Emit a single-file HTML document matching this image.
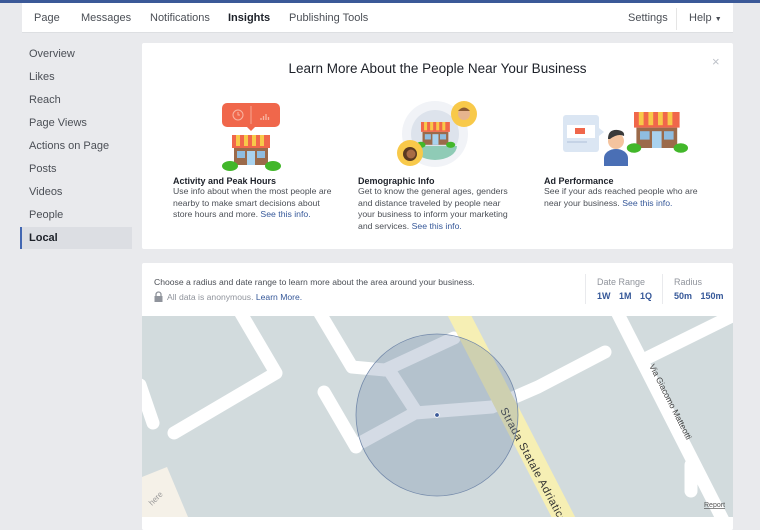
<!DOCTYPE html>
<html><head><meta charset="utf-8"><style>
*{margin:0;padding:0;box-sizing:border-box}
body{width:760px;height:530px;overflow:hidden;background:#e9eaed;font-family:"Liberation Sans",Arial,sans-serif;position:relative;color:#4b4f56}
.abs{position:absolute}
.topline{left:0;top:0;width:760px;height:3px;background:#3b5998}
.nav{left:22px;top:3px;width:711px;height:30px;background:#fff;border-bottom:1px solid #dddfe2}
.nav span{position:absolute;top:9px;font-size:11px;color:#4b4f56}
.side div{position:absolute;left:29px;font-size:11px;color:#4b4f56}
.card{background:#fff;border-radius:2px}
.h{font-size:9px;font-weight:bold;color:#1d2129}
.t{font-size:8.7px;line-height:11.7px;color:#4b4f56}
a{color:#365899;text-decoration:none}
</style></head><body>
<div class="abs topline"></div>
<div class="abs nav">
<span style="left:12px">Page</span>
<span style="left:59px">Messages</span>
<span style="left:128px">Notifications</span>
<span style="left:206px;font-weight:bold;color:#1d2129">Insights</span>
<span style="left:267px">Publishing Tools</span>
<span style="left:606px">Settings</span>
<div class="abs" style="left:654px;top:5px;width:1px;height:22px;background:#e5e5e5"></div>
<span style="left:667px">Help <span style="position:static;font-size:7px">▼</span></span>
</div>
<div class="side">
<div style="top:48px">Overview</div>
<div style="top:71px">Likes</div>
<div style="top:94px">Reach</div>
<div style="top:117px">Page Views</div>
<div style="top:140px">Actions on Page</div>
<div style="top:163px">Posts</div>
<div style="top:186px">Videos</div>
<div style="top:209px">People</div>
</div>
<div class="abs" style="left:20px;top:227px;width:112px;height:22px;background:#dcdee3;border-left:2px solid #4267b2"></div>
<div class="abs" style="left:29px;top:232px;font-size:11px;font-weight:bold;color:#1d2129">Local</div>

<div class="abs card" style="left:142px;top:43px;width:591px;height:206px"></div>
<div class="abs" style="left:142px;top:61px;width:591px;text-align:center;font-size:13.5px;color:#1d2129">Learn More About the People Near Your Business</div>
<div class="abs" style="left:712px;top:54px;font-size:13px;color:#bec2c9">×</div>

<svg class="abs" style="left:0;top:0" width="760" height="250">
<rect x="222" y="103" width="58" height="24" rx="5" fill="#f0674b"/>
<polygon points="247,127 255,127 251,131" fill="#f0674b"/>
<circle cx="238" cy="115" r="5" fill="none" stroke="#f8b5a3" stroke-width="1"/>
<path d="M238 112v3h2" stroke="#f8b5a3" fill="none" stroke-width="1"/>
<line x1="251" y1="106" x2="251" y2="124" stroke="#f8b5a3" stroke-width="0.8"/>
<path d="M261 120v-2M263.5 120v-4M266 120v-6M268.5 120v-3" stroke="#f8b5a3" stroke-width="1.3"/>
<g>
<rect x="234" y="148" width="34" height="17" fill="#9b6a4a"/>
<rect x="237" y="151" width="8" height="7" fill="#8fbde0"/>
<rect x="257" y="151" width="8" height="7" fill="#8fbde0"/>
<rect x="247" y="151" width="8" height="14" fill="#a9d2ee"/>
<rect x="232" y="135" width="38" height="13" fill="#f0674b"/>
<rect x="236" y="135" width="4" height="11" fill="#f8c94a"/><rect x="244" y="135" width="4" height="11" fill="#f8c94a"/><rect x="252" y="135" width="4" height="11" fill="#f8c94a"/><rect x="260" y="135" width="4" height="11" fill="#f8c94a"/>
<ellipse cx="230" cy="166" rx="8" ry="5" fill="#42b72a"/><ellipse cx="273" cy="166" rx="8" ry="5" fill="#42b72a"/>
</g>
<circle cx="435" cy="134" r="33" fill="#f1f3f7"/>
<circle cx="435" cy="134" r="24" fill="#dde3ec"/>
<path d="M413 146 h44 a22 14 0 0 1 -44 0z" fill="#8fcbb6"/>
<g transform="translate(421,122) scale(0.76) translate(-232,-135)">
<rect x="234" y="148" width="34" height="17" fill="#9b6a4a"/><rect x="237" y="151" width="8" height="7" fill="#8fbde0"/><rect x="257" y="151" width="8" height="7" fill="#8fbde0"/><rect x="247" y="151" width="8" height="14" fill="#a9d2ee"/><rect x="232" y="135" width="38" height="13" fill="#f0674b"/><rect x="236" y="135" width="4" height="11" fill="#f8c94a"/><rect x="244" y="135" width="4" height="11" fill="#f8c94a"/><rect x="252" y="135" width="4" height="11" fill="#f8c94a"/><rect x="260" y="135" width="4" height="11" fill="#f8c94a"/><ellipse cx="232" cy="165" rx="6" ry="4" fill="#42b72a"/><ellipse cx="271" cy="165" rx="6" ry="4" fill="#42b72a"/>
</g>
<circle cx="464" cy="114" r="13" fill="#f8c94a"/><circle cx="464" cy="114" r="6" fill="#e6b48e"/><path d="M458 111 q6 -7 12 0z" fill="#8a5a34"/>
<circle cx="410" cy="153" r="13" fill="#f8c94a"/><circle cx="410" cy="154" r="7" fill="#5a3a22"/><circle cx="411" cy="154" r="4.5" fill="#a86b45"/>
<rect x="563" y="115" width="36" height="37" rx="3" fill="#dbe6f3"/>
<rect x="567" y="125" width="28" height="13" fill="#fff"/>
<rect x="575" y="128" width="10" height="6" fill="#f0674b"/>
<rect x="567" y="141" width="20" height="2" fill="#c5d3e6"/>
<polygon points="599,128 604,132 599,136" fill="#dbe6f3"/>
<path d="M604 166 v-8 a12 9 0 0 1 24 0 v8z" fill="#4a6fb5"/>
<circle cx="616" cy="141" r="8" fill="#f4c39e"/><path d="M608 139 q0 -10 10 -9 q7 1 6 6 q-6 -3 -14 3z" fill="#3a3a3a"/>
<g transform="translate(634,112) scale(1.2) translate(-232,-135)">
<rect x="234" y="148" width="34" height="17" fill="#9b6a4a"/><rect x="237" y="151" width="8" height="7" fill="#8fbde0"/><rect x="257" y="151" width="8" height="7" fill="#8fbde0"/><rect x="247" y="151" width="8" height="14" fill="#a9d2ee"/><rect x="232" y="135" width="38" height="13" fill="#f0674b"/><rect x="236" y="135" width="4" height="11" fill="#f8c94a"/><rect x="244" y="135" width="4" height="11" fill="#f8c94a"/><rect x="252" y="135" width="4" height="11" fill="#f8c94a"/><rect x="260" y="135" width="4" height="11" fill="#f8c94a"/><ellipse cx="232" cy="165" rx="6" ry="4" fill="#42b72a"/><ellipse cx="271" cy="165" rx="6" ry="4" fill="#42b72a"/>
</g>
</svg>

<div class="abs" style="left:173px;top:176px;width:162px"><div class="h">Activity and Peak Hours</div><div class="t">Use info about when the most people are nearby to make smart decisions about store hours and more. <a>See this info.</a></div></div>
<div class="abs" style="left:358px;top:176px;width:156px"><div class="h">Demographic Info</div><div class="t">Get to know the general ages, genders and distance traveled by people near your business to inform your marketing and services. <a>See this info.</a></div></div>
<div class="abs" style="left:544px;top:176px;width:162px"><div class="h">Ad Performance</div><div class="t">See if your ads reached people who are near your business. <a>See this info.</a></div></div>

<div class="abs card" style="left:142px;top:263px;width:591px;height:267px"></div>
<div class="abs" style="left:154px;top:277px;font-size:8.6px;color:#4b4f56">Choose a radius and date range to learn more about the area around your business.</div>
<svg class="abs" style="left:154px;top:291px" width="9" height="11"><path d="M2 5V3.5a2.5 2.5 0 0 1 5 0V5" stroke="#90949c" fill="none" stroke-width="1.3"/><rect x="0.5" y="5" width="8" height="6" fill="#90949c"/></svg>
<div class="abs" style="left:167px;top:292px;font-size:8.6px;color:#90949c">All data is anonymous. <a>Learn More.</a></div>
<div class="abs" style="left:585px;top:274px;width:1px;height:30px;background:#e9eaed"></div>
<div class="abs" style="left:662px;top:274px;width:1px;height:30px;background:#e9eaed"></div>
<div class="abs" style="left:597px;top:277px;font-size:9px;color:#90949c">Date Range</div>
<div class="abs" style="left:597px;top:291px;font-size:9px;font-weight:bold;color:#365899;word-spacing:6px">1W 1M 1Q</div>
<div class="abs" style="left:674px;top:277px;font-size:9px;color:#90949c">Radius</div>
<div class="abs" style="left:674px;top:291px;font-size:9px;font-weight:bold;color:#365899;word-spacing:6px">50m 150m</div>

<svg class="abs" style="left:142px;top:316px" width="591" height="201" viewBox="142 316 591 201">
<rect x="142" y="316" width="591" height="201" fill="#d2dbdd"/>
<polygon points="142,477 167,467 188,517 142,517" fill="#f5f1e8"/>
<text x="152" y="506" font-size="8" fill="#9a9a9a" transform="rotate(-45 152 506)">here</text>
<g stroke="#fff" stroke-width="13" fill="none" stroke-linecap="round" stroke-linejoin="round">
<polyline points="239,310 276,373 174,433"/>
<polyline points="140,385 153,423"/>
<polyline points="318,310 352,367 385,370"/>
<polyline points="324,392 356,447"/>
<polyline points="362,442 415,413 492,407 538,387 605,352"/>
<polyline points="385,370 454,338"/>
<polyline points="389,370 415,410"/>
<polyline points="616,310 728,530"/>
<polyline points="649,357 740,312"/>
<polyline points="691,465 691,491"/>
</g>
<line x1="454" y1="305" x2="570" y2="530" stroke="#f6efb4" stroke-width="21"/>
<text x="500" y="410" font-size="11" fill="#333" transform="rotate(62 500 410)" letter-spacing="0.6">Strada  Statale  Adriatica</text>
<text x="649" y="366" font-size="8.5" fill="#444" transform="rotate(63 649 366)">Via Giacomo Matteotti</text>
<circle cx="437" cy="415" r="81" fill="#6f88a8" fill-opacity="0.3" stroke="#7389aa" stroke-width="0.8"/>
<circle cx="437" cy="415" r="2.3" fill="#3b5998" stroke="#fff" stroke-width="0.8"/>
<text x="704" y="507" font-size="7" fill="#555" text-decoration="underline">Report</text>
</svg>
</body></html>
